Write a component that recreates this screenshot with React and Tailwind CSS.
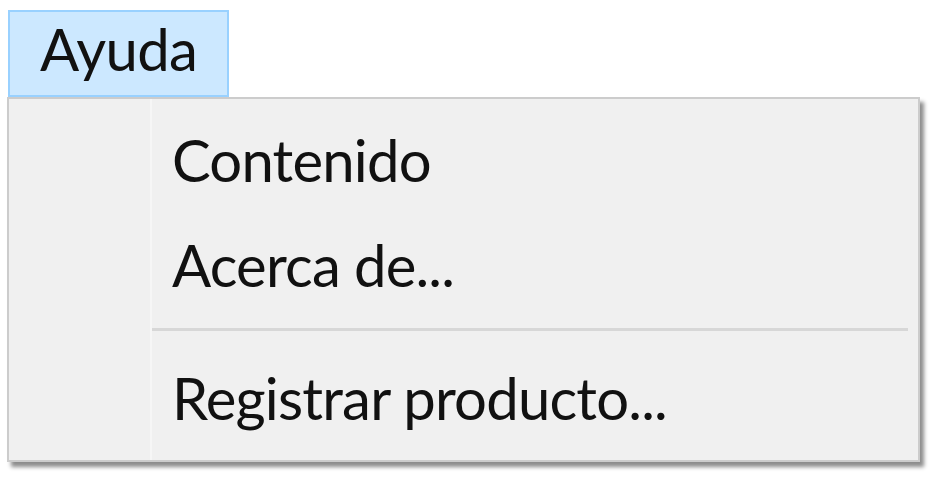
import React from 'react';

const items = [
  { label: 'Contenido' },
  { label: 'Acerca de...' },
];

export default function App() {
  return (
    <div className="w-[930px] h-[481px] bg-white overflow-hidden" style={{ fontFamily: 'Lato, "Open Sans", sans-serif' }}>
      {/* Menu bar item (open) */}
      <div className="pt-[10px] pl-[8px]">
        <div className="w-[221px] h-[87px] border-2 border-[#99d1ff] bg-[#cce8ff] pl-[30px] text-[58px] leading-[74px] tracking-[-0.6px] text-[#111]">
          Ayuda
        </div>
      </div>

      {/* Dropdown */}
      <div className="relative ml-[7px] w-[913px] h-[365px] border-2 border-[#cccccc] bg-[#f0f0f0] shadow-[4px_5px_4px_rgba(0,0,0,0.45)] pt-[8px]">
        {/* icon gutter line */}
        <div className="absolute left-[141px] top-0 bottom-0 w-[2px] bg-[#f6f6f6]" />
        {items.map((it) => (
          <div key={it.label} className="relative pl-[163px] h-[105px] text-[58px] leading-[105px] tracking-[-0.8px] text-[#111]">
            {it.label}
          </div>
        ))}
        <div className="relative mt-[11px] ml-[143px] mr-[10px] h-[3px] bg-[#d7d7d7]" />
        <div className="relative mt-[14px] pl-[163px] h-[105px] text-[58px] leading-[105px] tracking-[-0.8px] text-[#111]">
          Registrar producto...
        </div>
      </div>
    </div>
  );
}
